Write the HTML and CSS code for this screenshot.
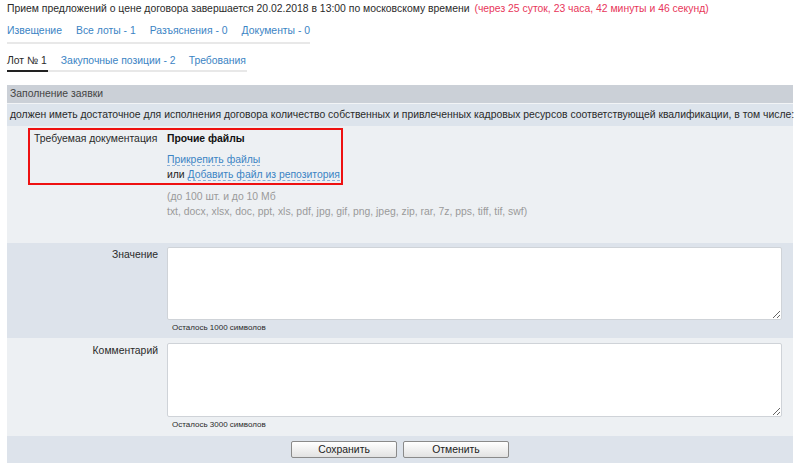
FILE: index.html
```html
<!DOCTYPE html>
<html lang="ru">
<head>
<meta charset="utf-8">
<link rel="stylesheet" href="styles.css">
</head>
<body>
<div class="title">Прием предложений о цене договора завершается 20.02.2018 в 13:00 по московскому времени <span class="countdown">(через 25 суток, 23 часа, 42 минуты и 46 секунд)</span></div>
<div class="nav">
  <a class="nav-item">Извещение</a>
  <a class="nav-item">Все лоты - 1</a>
  <a class="nav-item">Разъяснения - 0</a>
  <a class="nav-item">Документы - 0</a>
</div>
<div class="tabs">
  <span class="tab active">Лот № 1</span>
  <a class="tab">Закупочные позиции - 2</a>
  <a class="tab">Требования</a>
</div>
<div class="section">
  <div class="sec-head">Заполнение заявки</div>
  <div class="intro">должен иметь достаточное для исполнения договора количество собственных и привлеченных кадровых ресурсов соответствующей квалификации, в том числе:</div>
  <div class="docs">
    <div class="docbox">
      <div class="doc-label">Требуемая документация</div>
      <div class="doc-body">
        <div class="doc-name">Прочие файлы</div>
        <div class="doc-links">
          <div><a class="dlink">Прикрепить файлы</a></div>
          <div>или <a class="dlink">Добавить файл из репозитория</a></div>
        </div>
      </div>
    </div>
    <div class="hint">(до 100 шт. и до 10 Мб</div>
    <div class="hint">txt, docx, xlsx, doc, ppt, xls, pdf, jpg, gif, png, jpeg, zip, rar, 7z, pps, tiff, tif, swf)</div>
  </div>
  <div class="field-row dark">
    <div class="field-label">Значение</div>
    <div class="field-control">
      <textarea class="ta ta-value"></textarea>
      <div class="counter">Осталось 1000 символов</div>
    </div>
  </div>
  <div class="field-row light second">
    <div class="field-label">Комментарий</div>
    <div class="field-control">
      <textarea class="ta ta-comment"></textarea>
      <div class="counter">Осталось 3000 символов</div>
    </div>
  </div>
  <div class="buttons">
    <button class="btn">Сохранить</button>
    <button class="btn">Отменить</button>
  </div>
</div>
</body>
</html>
```
FILE: styles.css
```css
html, body {
  margin: 0;
  padding: 0;
  background: #ffffff;
}
body {
  padding: 0 7px;
  font-family: "Liberation Sans", Arial, sans-serif;
  font-size: 10.4px;
  color: #2a2a2a;
}
a {
  color: #3b84c4;
  text-decoration: none;
}
.title {
  line-height: 18px;
  height: 18px;
  white-space: nowrap;
}
.countdown {
  color: #e8365a;
  margin-left: 2px;
}
.nav {
  display: flex;
  margin-top: 4px;
  width: 303px;
  border-bottom: 2px solid #e8e8e8;
  padding-bottom: 2px;
  white-space: nowrap;
}
.nav-item {
  line-height: 18px;
  margin-right: 14px;
  flex-shrink: 0;
}
.tabs {
  display: flex;
  width: 240px;
  margin-top: 8px;
  border-bottom: 2px solid #e8e8e8;
  white-space: nowrap;
}
.tab {
  line-height: 18px;
  margin-right: 13px;
  flex-shrink: 0;
}
.tab.active {
  color: #2a2a2a;
  border-bottom: 2px solid #222222;
  margin-bottom: -2px;
  padding-right: 1px;
}
.section {
  margin-top: 13px;
  width: 786px;
}
.sec-head {
  height: 18px;
  line-height: 18px;
  background: #cbd0d7;
  padding-left: 3px;
  color: #444444;
  border-bottom: 1px solid #f2f4f6;
}
.intro {
  background: #dde4ec;
  line-height: 22px;
  height: 22px;
  padding-left: 3px;
  white-space: nowrap;
}
.docs {
  background: #edf0f3;
  padding: 2px 0 24px 0;
}
.docbox {
  margin-left: 21px;
  width: 311px;
  border: 2px solid #ee1111;
  display: flex;
  padding: 1px 0;
  white-space: nowrap;
}
.doc-label {
  width: 124px;
  padding-left: 4px;
  line-height: 15px;
}
.doc-body {
  margin-left: 9px;
  line-height: 15px;
}
.doc-name {
  font-weight: bold;
  color: #111111;
}
.doc-links {
  margin-top: 6px;
  color: #222222;
}
.dlink {
  border-bottom: 1px dashed #8fb3d9;
}
.hint {
  margin-left: 160px;
  line-height: 15px;
  color: #9a9a9a;
  white-space: nowrap;
}
.docbox + .hint {
  margin-top: 4px;
}
.field-row {
  display: grid;
  grid-template-columns: 151px 615px;
  column-gap: 9px;
  padding: 4px 0 4px 0;
}
.field-row.second {
  padding: 5px 0 5px 0;
}
.dark {
  background: #dde3eb;
}
.light {
  background: #edf0f3;
}
.field-label {
  text-align: right;
  line-height: 15px;
}
.field-control {
  display: flex;
  flex-direction: column;
}
.ta {
  display: block;
  box-sizing: border-box;
  width: 615px;
  margin: 0;
  border: 1px solid #cfd3d8;
  border-radius: 2px;
  background: #ffffff;
  font-family: "Liberation Sans", Arial, sans-serif;
  font-size: 12px;
}
.ta-value {
  height: 73px;
}
.ta-comment {
  height: 74px;
}
.counter {
  margin-top: 2px;
  padding-left: 5px;
  font-size: 8px;
  line-height: 12px;
  white-space: nowrap;
}
.buttons {
  background: #dde3eb;
  display: flex;
  justify-content: center;
  gap: 6px;
  padding: 5px 0 5px 0;
}
.btn {
  width: 106px;
  height: 17px;
  padding: 0;
  border: 1px solid #8a8a8a;
  border-radius: 2px;
  background: linear-gradient(#ffffff, #e2e2e2);
  font-family: "Liberation Sans", Arial, sans-serif;
  font-size: 10.4px;
  color: #222222;
  line-height: 15px;
}
```
